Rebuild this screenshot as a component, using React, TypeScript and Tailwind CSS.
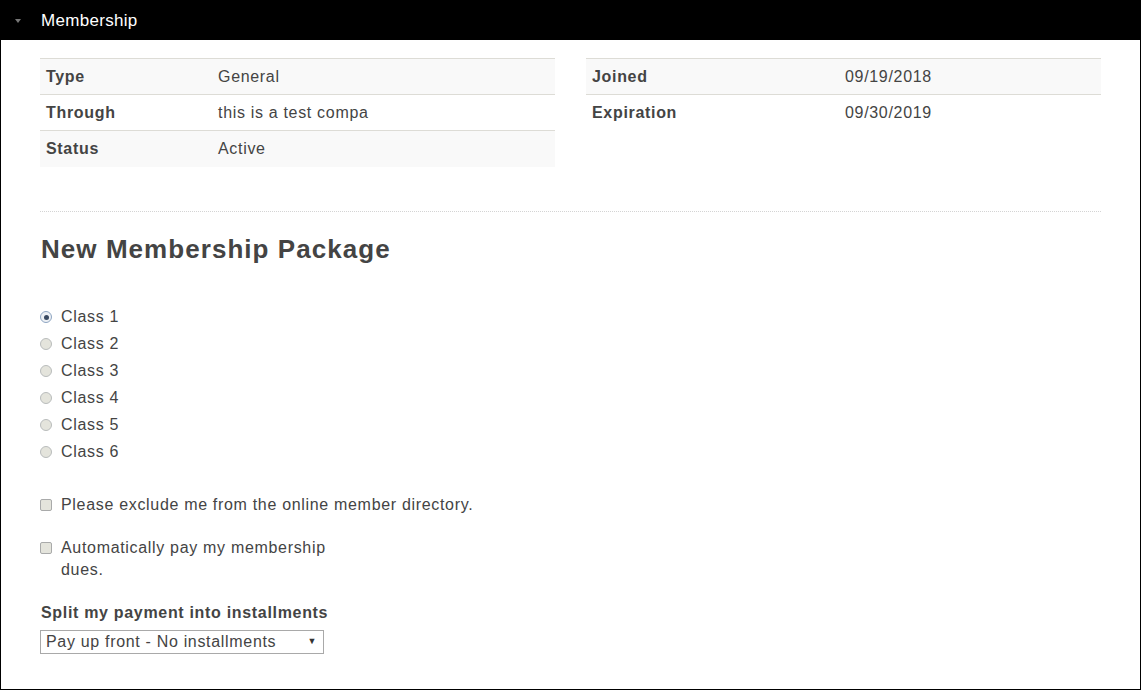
import React from "react";

const left = [
  { label: "Type", value: "General" },
  { label: "Through", value: "this is a test compa" },
  { label: "Status", value: "Active" },
];

const right = [
  { label: "Joined", value: "09/19/2018" },
  { label: "Expiration", value: "09/30/2019" },
];

const classes = ["Class 1", "Class 2", "Class 3", "Class 4", "Class 5", "Class 6"];

function InfoTable({ rows, labelWidth }: { rows: { label: string; value: string }[]; labelWidth: string }) {
  return (
    <table className="w-[515px] border-collapse border-t border-[#dddcd6]">
      <tbody>
        {rows.map((r, i) => (
          <tr key={r.label} className={`${i % 2 === 0 ? "bg-[#f9f9f9]" : "bg-white"} ${i > 0 ? "border-t border-[#dddcd6]" : ""}`}>
            <td className={`${labelWidth} h-[36px] px-[6px] font-bold align-middle`}>{r.label}</td>
            <td className="h-[36px] px-[6px] align-middle">{r.value}</td>
          </tr>
        ))}
      </tbody>
    </table>
  );
}

function Radio({ checked }: { checked?: boolean }) {
  return (
    <span
      className={`flex h-[12px] w-[12px] shrink-0 items-center justify-center rounded-full border ${
        checked ? "border-[#8fa6c2] bg-[#eef1f5]" : "border-[#b9bcbc] bg-[#e4e4dc]"
      }`}
    >
      {checked && <span className="h-[5px] w-[5px] rounded-full bg-[#3a4a62]" />}
    </span>
  );
}

function Checkbox() {
  return <span className="mt-[5px] block h-[12px] w-[12px] shrink-0 rounded-[2px] border border-[#a9aaaa] bg-[#e4e4dc]" />;
}

export default function App() {
  return (
    <div className="h-[690px] w-[1141px] border border-black bg-white text-[16px] tracking-[0.68px] text-[#444] [font-family:'Liberation_Sans',Arial,sans-serif]">
      {/* header */}
      <div className="flex h-[39px] items-center bg-black">
        <span className="ml-[14px] h-0 w-0 border-x-[3.5px] border-t-[4px] border-x-transparent border-t-[#777]" />
        <span className="ml-[20px] text-[17px] tracking-[0.3px] text-white">Membership</span>
      </div>

      <div className="px-[39px] pt-[18px]">
        <div className="flex items-start justify-between">
          <InfoTable rows={left} labelWidth="w-[172px]" />
          <InfoTable rows={right} labelWidth="w-[253px]" />
        </div>

        <div className="mt-[44px] border-t border-dotted border-[#d4d4d4]" />

        <h2 className="mt-[22px] pl-px text-[26px] font-bold leading-[30px] tracking-[1.05px] text-[#444]">New Membership Package</h2>

        <div className="mt-[40px] flex flex-col">
          {classes.map((c, i) => (
            <label key={c} className="flex h-[27px] items-center">
              <Radio checked={i === 0} />
              <span className="ml-[9px]">{c}</span>
            </label>
          ))}
        </div>

        <label className="mt-[28px] flex leading-[22px]">
          <Checkbox />
          <span className="ml-[9px]">Please exclude me from the online member directory.</span>
        </label>

        <label className="mt-[21px] flex leading-[22px]">
          <Checkbox />
          <span className="ml-[9px] w-[285px]">Automatically pay my membership dues.</span>
        </label>

        <div className="mt-[21px] pl-px font-bold leading-[22px]">Split my payment into installments</div>

        <div className="mt-[6px] flex h-[24px] w-[284px] items-center justify-between border border-[#a9a9a9] bg-white pl-[5px] pr-[6px]">
          <span>Pay up front - No installments</span>
          <span className="text-[9px] text-[#333]">▼</span>
        </div>
      </div>
    </div>
  );
}
